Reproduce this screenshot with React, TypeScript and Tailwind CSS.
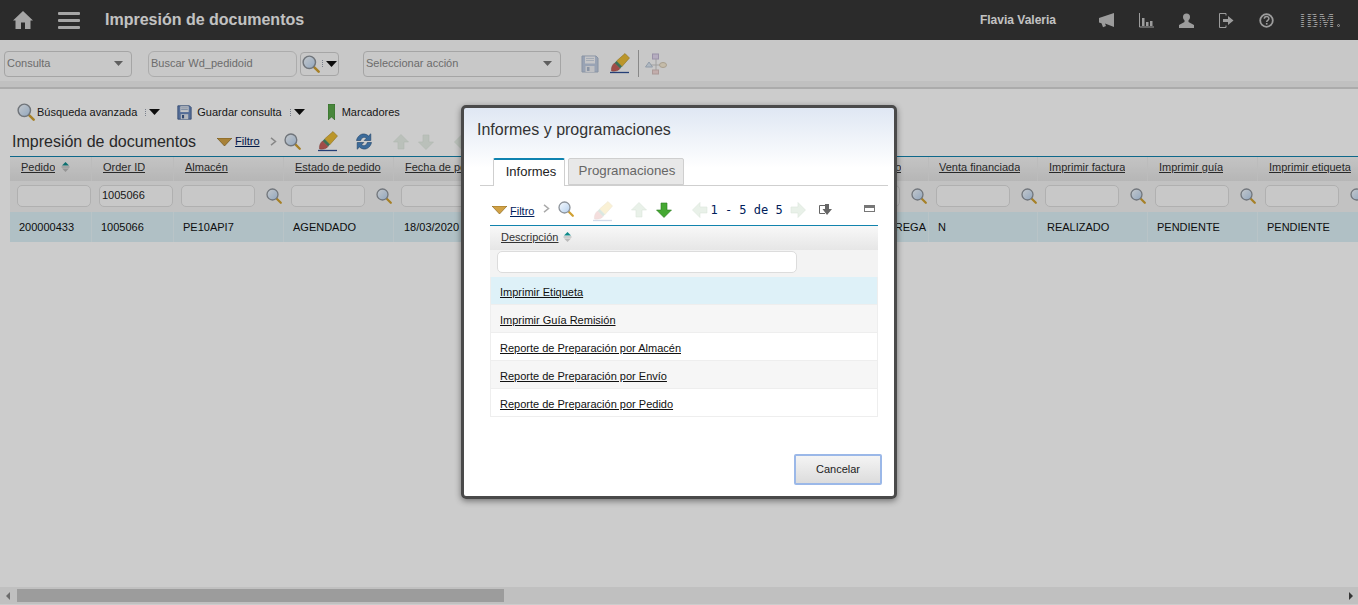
import React from "react";

const font = "[font-family:'Liberation_Sans',Arial,sans-serif]";

const Magnifier = ({ size = 16 }: { size?: number }) => (
  <svg width={size} height={size} viewBox="0 0 16 16" className="shrink-0">
    <defs>
      <linearGradient id="glass" x1="0" y1="0" x2="1" y2="1">
        <stop offset="0" stopColor="#f7fbff" />
        <stop offset="1" stopColor="#b5d0ee" />
      </linearGradient>
    </defs>
    <path d="M10.5 10.5 14.8 14.8" stroke="#d0a030" strokeWidth="2.2" strokeLinecap="round" />
    <circle cx="6.500" cy="6.500" r="5.500" fill="url(#glass)" stroke="#8d939a" strokeWidth="1.300" />
  </svg>
);

const Caret = () => (
  <svg width="11" height="6" viewBox="0 0 11 6" className="shrink-0">
    <path d="M0 0h11L5.500 6z" fill="#111" />
  </svg>
);

const DotSep = () => (
  <span className="flex w-[2px] flex-col gap-[1px]">
    <span className="h-[1px] w-[1px] bg-gray-400" />
    <span className="h-[1px] w-[1px] bg-gray-400" />
    <span className="h-[1px] w-[1px] bg-gray-400" />
    <span className="h-[1px] w-[1px] bg-gray-400" />
  </span>
);

const Floppy = ({ muted, size = 18 }: { muted?: boolean; size?: number }) => (
  <svg width={size} height={size} viewBox="0 0 18 18" className={muted ? "opacity-40" : ""}>
    <path d="M1 1h14l2 2v14H1z" fill="#6a89bd" stroke="#3d5a8c" />
    <rect x="4" y="1.500" width="10" height="7" fill="#f3f5f8" />
    <path d="M5 3.500h8M5 5.500h8" stroke="#8fa3c2" />
    <rect x="4.500" y="11" width="9" height="6" fill="#dfe4ec" />
    <rect x="6" y="12" width="2.500" height="4" fill="#3d5a8c" />
  </svg>
);

const Eraser = ({ muted }: { muted?: boolean }) => (
  <svg width="21" height="21" viewBox="0 0 21 21" className={muted ? "opacity-20" : ""}>
    <path d="M7.500 8 16 .5 20.500 5 13 13.500z" fill="#eabc35" stroke="#a5821f" strokeWidth=".5" />
    <path d="M5.500 10 7.500 8 13 13.500l-2 2z" fill="#4b8b6b" />
    <path d="M5.500 10 11 15.500C9.500 18 6 18.500 2.500 18c-.5-3 .5-6 3-8z" fill="#c9605a" stroke="#8e3f3b" strokeWidth=".4" />
    <path d="M1 19.500h19" stroke="#2f4f94" strokeWidth="1.300" />
  </svg>
);

const Refresh = () => (
  <svg width="18" height="17" viewBox="0 0 18 17">
    <path d="M1.500 7.500C2.500 3 6 .5 9.500 1c1.800.2 3 1 4 2L15.800.8v6.700H9.200l2.200-2.300c-1.700-1.400-4.500-1.400-5.700 2.300z" fill="#4a86c2" stroke="#27527f" strokeWidth=".6" />
    <path d="M16.500 9.500C15.500 14 12 16.500 8.500 16c-1.800-.2-3-1-4-2l-2.300 2.200V9.500h6.600l-2.200 2.300c1.700 1.400 4.500 1.400 5.700-2.300z" fill="#4a86c2" stroke="#27527f" strokeWidth=".6" />
  </svg>
);

const Arrow = ({ dir, active }: { dir: "up" | "down" | "left" | "right"; active?: boolean }) => {
  const rotate = { up: "rotate-0", down: "rotate-180", left: "-rotate-90", right: "rotate-90" }[dir];
  return (
    <svg width="16" height="16" viewBox="0 0 16 16" className={rotate}>
      <path
        d="M8 .5 15.500 8H11v7H5V8H.5z"
        fill={active ? "#45a832" : "#e9f1e9"}
        stroke={active ? "#2a7a1f" : "#dbe5db"}
        strokeWidth=".6"
      />
    </svg>
  );
};

const Funnel = () => (
  <svg width="15" height="8" viewBox="0 0 15 8">
    <path d="M0 0h15L7.500 8z" fill="#d2a245" stroke="#7c5a14" strokeWidth=".6" />
  </svg>
);

const Chevron = () => (
  <svg width="7" height="9" viewBox="0 0 7 9">
    <path d="M1 .8 5.500 4.500 1 8.200" fill="none" stroke="#aaa" strokeWidth="1.500" />
  </svg>
);

const SortMark = () => (
  <svg width="9" height="10" viewBox="0 0 9 10" className="shrink-0">
    <path d="M4.500 0 8 3.500H1z" fill="#0f8a8a" />
    <path d="M0.500 5h8" stroke="#aaa" />
    <path d="M1 6.500h7L4.500 10z" fill="#bbb" />
  </svg>
);

const columns = [
  { key: "pedido", label: "Pedido", width: "w-[82px]", head: "pl-[11px]", sort: true, search: false, value: "200000433", pad: "pl-[9px]" },
  { key: "order", label: "Order ID", width: "w-[82px]", head: "pl-[11px]", search: false, filter: "1005066", value: "1005066", pad: "pl-[9px]" },
  { key: "almacen", label: "Almacén", width: "w-[110px]", head: "pl-[11px]", search: true, value: "PE10API7", pad: "pl-[9px]" },
  { key: "estado", label: "Estado de pedido", width: "w-[110px]", head: "pl-[11px]", search: true, value: "AGENDADO", pad: "pl-[9px]" },
  { key: "fecha", label: "Fecha de pedido", width: "w-[95px]", head: "pl-[11px]", search: false, value: "18/03/2020", pad: "pl-[10px]" },
  { key: "a", label: "", width: "w-[110px]", head: "pl-[11px]", search: true, value: "", pad: "pl-[9px]" },
  { key: "b", label: "", width: "w-[110px]", head: "pl-[11px]", search: true, value: "", pad: "pl-[9px]" },
  { key: "c", label: "", width: "w-[110px]", head: "pl-[11px]", search: true, value: "", pad: "pl-[9px]" },
  { key: "d", label: "Tipo de envío", width: "w-[110px]", head: "pl-[16px]", search: true, value: "EN ENTREGA", pad: "justify-end pr-[2px]" },
  { key: "venta", label: "Venta financiada", width: "w-[109px]", head: "pl-[10px]", search: true, value: "N", pad: "pl-[9px]" },
  { key: "factura", label: "Imprimir factura", width: "w-[110px]", head: "pl-[11px]", search: true, value: "REALIZADO", pad: "pl-[9px]" },
  { key: "guia", label: "Imprimir guía", width: "w-[110px]", head: "pl-[11px]", search: true, value: "PENDIENTE", pad: "pl-[9px]" },
  { key: "etiqueta", label: "Imprimir etiqueta", width: "w-[110px]", head: "pl-[11px]", search: true, value: "PENDIENTE", pad: "pl-[9px]" },
];

const reports = [
  { label: "Imprimir Etiqueta", bg: "bg-[#def1f8]" },
  { label: "Imprimir Guía Remisión", bg: "bg-[#f6f6f6]" },
  { label: "Reporte de Preparación por Almacén", bg: "bg-white" },
  { label: "Reporte de Preparación por Envío", bg: "bg-[#f6f6f6]" },
  { label: "Reporte de Preparación por Pedido", bg: "bg-white" },
];

function TopBar() {
  return (
    <header className="flex h-10 shrink-0 items-center bg-[#363636] text-[#f3f3f3]">
      <svg width="20" height="18" viewBox="0 0 20 18" className="ml-[13px] text-[#d0d0d0]">
        <path d="M10 0 0 9.500h2.500V18h5.500v-6.500h4V18h5.500V9.500H20z" fill="currentColor" />
      </svg>
      <div className="ml-[25px] flex w-[22px] flex-col gap-[4px]">
        <span className="h-[3px] rounded-[1px] bg-[#d0d0d0]" />
        <span className="h-[3px] rounded-[1px] bg-[#d0d0d0]" />
        <span className="h-[3px] rounded-[1px] bg-[#d0d0d0]" />
      </div>
      <h1 className="ml-[25px] text-[16px] font-bold">Impresión de documentos</h1>
      <span className="ml-auto text-[12px] font-bold">Flavia Valeria</span>
      <div className="ml-[43px] flex items-center gap-[25px] pr-[18px] text-[#c4c4c4]">
        <svg width="15" height="15" viewBox="0 0 15 15">
          <path d="M15 0v14L6 10.500l1 2.500-3 1.200-1.500-4L0 9.500V5z" fill="currentColor" />
        </svg>
        <svg width="15" height="15" viewBox="0 0 15 15">
          <path d="M.5 0v14H15" fill="none" stroke="currentColor" />
          <path d="M3 5h2.500v8H3zM7 9h2.500v4H7zM11 8h2.500v5H11z" fill="currentColor" />
        </svg>
        <svg width="15" height="15" viewBox="0 0 15 15">
          <circle cx="7.500" cy="4" r="3.500" fill="currentColor" />
          <path d="M5.500 6.500h4v2.500L15 12v3H0v-3l5.500-3z" fill="currentColor" />
        </svg>
        <svg width="15" height="15" viewBox="0 0 15 15">
          <path d="M7 2.500V.5H.5v14H7v-2" fill="none" stroke="currentColor" />
          <path d="M4 6h5V3l5.500 4.500L9 12V9H4z" fill="currentColor" />
        </svg>
        <svg width="15" height="15" viewBox="0 0 15 15">
          <circle cx="7.500" cy="7.500" r="6.300" fill="none" stroke="currentColor" strokeWidth="1.800" />
          <path d="M5.300 5.800c0-3 4.600-3 4.600-.2 0 1.700-2.200 1.700-2.200 3.400" fill="none" stroke="currentColor" strokeWidth="1.500" />
          <rect x="6.900" y="10" width="1.600" height="1.600" fill="currentColor" />
        </svg>
        <div className="flex items-end">
          <span className="relative flex h-[15px] w-[36px] items-center justify-center">
            <span className="scale-y-125 [font-family:'Liberation_Serif',serif] text-[18px] font-bold leading-none">IBM</span>
            <span className="absolute inset-0 bg-[repeating-linear-gradient(#363636_0_1px,transparent_1px_2px)]" />
          </span>
          <span className="mb-[1px] ml-[2px] h-[3px] w-[3px] rounded-full border border-[#c4c4c4]" />
        </div>
      </div>
    </header>
  );
}

function ActionBar() {
  return (
    <div className="flex h-[49px] shrink-0 items-center border-b-2 border-[#d6d6d6] bg-[linear-gradient(#fafafa_88%,#f0f0f0_88%)] text-[11px] text-[#888]">
      <div className="ml-[4px] flex h-[26px] w-[128px] items-center justify-between rounded-[4px] border border-[#cfcfcf] pl-[2px] pr-[8px]">
        Consulta
        <svg width="9" height="5" viewBox="0 0 9 5"><path d="M0 0h9L4.500 5z" fill="#777" /></svg>
      </div>
      <div className="ml-[16px] flex h-[26px] w-[149px] items-center rounded-[6px] border border-[#d8d8d8] pl-[2px]">
        Buscar Wd_pedidoid
      </div>
      <div className="ml-[3px] flex h-[24px] w-[39px] items-center gap-[2px] rounded-[4px] border border-[#d0d0d0] pl-[1px]">
        <Magnifier size={18} />
        <DotSep />
        <Caret />
      </div>
      <div className="ml-[24px] flex h-[26px] w-[198px] items-center justify-between rounded-[4px] border border-[#cfcfcf] pl-[2px] pr-[8px]">
        Seleccionar acción
        <svg width="9" height="5" viewBox="0 0 9 5"><path d="M0 0h9L4.500 5z" fill="#777" /></svg>
      </div>
      <div className="ml-[20px]"><Floppy muted /></div>
      <div className="ml-[10px]"><Eraser /></div>
      <span className="ml-[8px] h-[27px] w-px bg-[#aaa]" />
      <svg width="22" height="22" viewBox="0 0 22 22" className="ml-[6px] opacity-60">
        <path d="M11 6v14M4 12h14" stroke="#aaa" />
        <rect x="7.500" y="1" width="6" height="5" fill="#d6c4ec" stroke="#9c8bb8" />
        <rect x="7.500" y="17" width="6" height="4" fill="#f0c4c0" stroke="#c09a96" />
        <path d="M4 9 7.500 14H.5z" fill="#c8dcef" stroke="#8aa0b8" />
        <ellipse cx="18" cy="12" rx="3.500" ry="2.500" fill="#f6e4bc" stroke="#b8a682" />
      </svg>
    </div>
  );
}

function QuickLinks() {
  return (
    <div className="flex h-[40px] items-end pb-[8px] text-[11px] text-[#222]">
      <div className="flex h-[18px] items-center">
        <span className="ml-[17px] flex items-center gap-[2px]">
          <Magnifier size={18} />
          Búsqueda avanzada
        </span>
        <span className="ml-[8px] flex items-center gap-[2px]"><DotSep /><Caret /></span>
        <span className="ml-[17px] flex items-center gap-[5px]">
          <Floppy size={15} />
          Guardar consulta
        </span>
        <span className="ml-[8px] flex items-center gap-[2px]"><DotSep /><Caret /></span>
        <span className="ml-[23px] flex items-center gap-[7px]">
          <svg width="7" height="16" viewBox="0 0 7 16">
            <path d="M0 0h7v16L3.500 13 0 16z" fill="#5aa84a" stroke="#38752c" strokeWidth=".6" />
          </svg>
          Marcadores
        </span>
      </div>
    </div>
  );
}

function DataTable() {
  return (
    <div className="ml-[10px] w-[1480px] border-t border-[#1283ad]">
      <div className="flex h-[24px] bg-[linear-gradient(#f5f5f5,#e4e4e4)]">
        {columns.map((c) => (
          <div key={c.key} className={`${c.width} ${c.head} flex shrink-0 items-center gap-[6px] border-r border-[#ececec] pb-[4px]`}>
            <span className="truncate text-[11px] text-[#333] underline">{c.label}</span>
            {c.sort && <SortMark />}
          </div>
        ))}
      </div>
      <div className="flex h-[31px] bg-[#f3f3f3]">
        {columns.map((c) => (
          <div key={c.key} className={`${c.width} flex shrink-0 items-center pb-[2px] pl-[7px]`}>
            <div className="flex h-[22px] w-[74px] shrink-0 items-center rounded-[5px] border border-[#dcdcdc] bg-[#fbfbfb] pl-[2px] text-[11px] text-[#222]">
              {c.filter}
            </div>
            {c.search && <span className="ml-[11px]"><Magnifier size={16} /></span>}
          </div>
        ))}
      </div>
      <div className="flex h-[30px] bg-[#dcf0f7] text-[11px] text-[#111]">
        {columns.map((c) => (
          <div
            key={c.key}
            className={`${c.width} ${c.pad} flex shrink-0 items-center overflow-hidden whitespace-nowrap border-r border-[#e8f5f9]`}
          >
            {c.value}
          </div>
        ))}
      </div>
    </div>
  );
}

function Modal() {
  return (
    <div className="absolute left-[461px] top-[105px] h-[394px] w-[436px] rounded-[5px] border-[3px] border-[#4a4a4a] bg-[linear-gradient(#dfe7f3_0,#ffffff_60px)] text-[#222] shadow-[0_2px_6px_rgba(0,0,0,0.45)]">
      <h2 className="ml-[13px] mt-[12px] text-[16px] leading-[20px] text-[#333]">Informes y programaciones</h2>
      <div className="ml-[16px] mr-[6px] mt-[18px] flex h-[28px] items-end border-b border-[#cfcfcf] pl-[13px]">
        <div className="-mb-px flex h-[28px] w-[72px] items-center justify-center rounded-t-[2px] border border-b-0 border-[#cfcfcf] border-t-2 border-t-[#0f83b0] bg-white pb-[2px] pl-[4px] text-[13px] text-[#222]">
          Informes
        </div>
        <div className="ml-[3px] flex h-[27px] w-[116px] items-center justify-center rounded-t-[2px] border border-[#cfcfcf] bg-[#e8e8e8] pb-[1px] pl-[2px] text-[13.3px] text-[#666]">
          Programaciones
        </div>
      </div>
      <div className="ml-[26px] mr-[16px] mt-[12px] flex h-[27px] items-start pt-[4px] text-[11px]">
        <span className="ml-[2px] mt-[4px]"><Funnel /></span>
        <span className="ml-[3px] mt-[1px] text-[11px] text-[#00205b] underline">Filtro</span>
        <span className="ml-[9px] mt-[2px]"><Chevron /></span>
        <span className="ml-[8px] -mt-[1px]"><Magnifier size={16} /></span>
        <span className="ml-[18px] -mt-[1px]"><Eraser muted /></span>
        <span className="ml-[18px]"><Arrow dir="up" /></span>
        <span className="ml-[9px]"><Arrow dir="down" active /></span>
        <span className="ml-[20px]"><Arrow dir="left" /></span>
        <span className="ml-[2px] whitespace-pre [font-family:'DejaVu_Sans_Mono',monospace] text-[12px] leading-[16px] text-[#00205b]">1 - 5 de 5</span>
        <span className="ml-[7px]"><Arrow dir="right" /></span>
        <svg width="14" height="12" viewBox="0 0 14 12" className="ml-[13px] mt-[2px]">
          <path d="M6 1.500H.5v8H6" fill="none" stroke="#666" />
          <path d="M6 0h4v5h3L8 11 3.500 5H6z" fill="#666" />
        </svg>
        <svg width="11" height="7" viewBox="0 0 11 7" className="ml-auto mr-[3px] mt-[3px]">
          <rect x=".5" y=".5" width="10" height="6" fill="#fff" stroke="#777" />
          <rect x=".5" y=".5" width="10" height="2.500" fill="#777" />
        </svg>
      </div>
      <div className="ml-[26px] mr-[16px] border-t border-[#1283ad]">
        <div className="flex h-[24px] items-center gap-[5px] bg-[linear-gradient(#f8f8f8,#e6e6e6)] pb-[2px] pl-[11px] text-[11px] text-[#333]">
          <span className="underline">Descripción</span>
          <SortMark />
        </div>
        <div className="flex h-[27px] items-start bg-[#f3f3f3] pl-[7px] pt-[1px]">
          <div className="h-[22px] w-[300px] rounded-[5px] border border-[#dcdcdc] bg-white" />
        </div>
        <div className="border-x border-[#eeeeee]">
          {reports.map((r) => (
            <div key={r.label} className={`${r.bg} flex h-[28px] items-center border-b border-[#eeeeee] pl-[9px] pt-[4px] text-[11px] text-[#111]`}>
              <span className="underline">{r.label}</span>
            </div>
          ))}
        </div>
      </div>
      <div className="mt-[37px] flex justify-end pr-[12px]">
        <button className="h-[31px] w-[88px] rounded-[2px] border-2 border-[#9bb8e8] bg-[linear-gradient(#f4f4f4,#dcdcdc)] text-[11px] text-[#222]">
          Cancelar
        </button>
      </div>
    </div>
  );
}

export default function App() {
  return (
    <div className={`relative flex h-[605px] w-[1358px] flex-col overflow-hidden bg-white ${font}`}>
      <TopBar />
      <ActionBar />
      <main className="min-h-0 flex-1 overflow-hidden">
        <QuickLinks />
        <div className="mb-[2px] flex h-[25px] items-center pl-[12px]">
          <h2 className="text-[16px] text-[#333]">Impresión de documentos</h2>
          <span className="ml-[21px]"><Funnel /></span>
          <span className="ml-[3px] text-[11px] text-[#00205b] underline">Filtro</span>
          <span className="ml-[10px]"><Chevron /></span>
          <span className="ml-[7px]"><Magnifier size={17} /></span>
          <span className="ml-[16px]"><Eraser /></span>
          <span className="ml-[17px]"><Refresh /></span>
          <span className="ml-[20px]"><Arrow dir="up" /></span>
          <span className="ml-[9px]"><Arrow dir="down" /></span>
          <span className="ml-[20px]"><Arrow dir="left" /></span>
        </div>
        <DataTable />
      </main>
      <div className="mb-[1px] flex h-[17px] shrink-0 items-center bg-[#f0f0f0]">
        <svg width="4" height="8" viewBox="0 0 4 8" className="ml-[6px]"><path d="M4 0v8L0 4z" fill="#888" /></svg>
        <div className="ml-[7px] h-[13px] w-[487px] bg-[#c3c3c3]" />
        <svg width="4" height="8" viewBox="0 0 4 8" className="ml-auto mr-[5px]"><path d="M0 0v8l4-4z" fill="#444" /></svg>
      </div>
      <div className="absolute inset-0 bg-black/20" />
      <Modal />
    </div>
  );
}
